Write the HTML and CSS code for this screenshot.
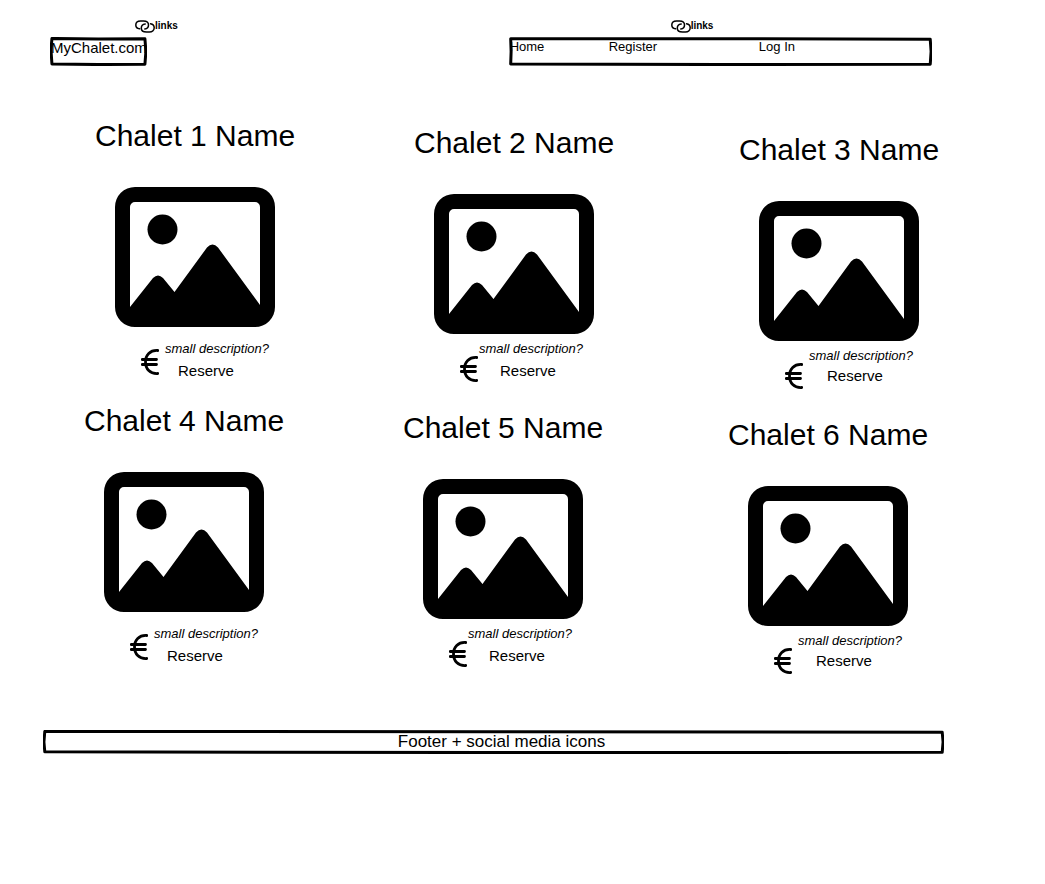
FILE: index.html
```html
<!DOCTYPE html>
<html lang="en">
<head>
<meta charset="utf-8">
<meta name="viewport" content="width=device-width, initial-scale=1">
<title>MyChalet.com</title>
<link rel="stylesheet" href="styles.css">
</head>
<body>
<svg class="defs" aria-hidden="true">
  <symbol id="chain" viewBox="0 0 20 13">
    <path d="M4.500 8.800C2 8.500 .8 7 .8 5C.8 2.500 2.800 1 5.500 1H8.500C11.500 1 13.500 2.700 13.500 5C13.500 7.300 12 8.800 9.800 9M15.500 3.800C18 4.200 19.200 5.800 19.200 7.800C19.200 10.300 17 12 14.500 12H11.500C8.500 12 6.300 10.500 6.300 8.200C6.300 6 8 4.200 10.200 4" fill="none" stroke="#000" stroke-width="1.500" stroke-linecap="round"/>
  </symbol>
  <symbol id="picture" viewBox="0 0 160 140">
    <path fill-rule="evenodd" d="M20 0H140A20 20 0 0 1 160 20V120A20 20 0 0 1 140 140H20A20 20 0 0 1 0 120V20A20 20 0 0 1 20 0ZM20 15A5 5 0 0 0 15 20V120L38 91Q43 86 48 91L59.500 105L92 60.500Q97.500 54.500 103 60.500L145 118V20A5 5 0 0 0 140 15Z"/>
    <circle cx="47.500" cy="42.500" r="15"/>
  </symbol>
  <symbol id="euro" viewBox="0 0 18 26">
    <path d="M16.800 1.500C9 1 4.500 6 4.500 13S9 25 16.800 24.500M1.200 10.500H15.500M1.200 15.500H15.500" fill="none" stroke="#000" stroke-width="2.800" stroke-linecap="round"/>
  </symbol>
</svg>

<header class="header">
  <div class="brand">
    <div class="note"><svg class="chain"><use href="#chain"/></svg><span>links</span></div>
    <div class="box">
      <svg class="outline" viewBox="0 0 100 100" preserveAspectRatio="none" aria-hidden="true"><path d="M2 5L50 7L98 6L99 50L98 94L50 95L2 93L1 45Z"/></svg>
      <a class="logo" href="#">MyChalet.com</a>
    </div>
  </div>
  <div class="menu">
    <div class="note"><svg class="chain"><use href="#chain"/></svg><span>links</span></div>
    <nav class="box">
      <svg class="outline" viewBox="0 0 100 100" preserveAspectRatio="none" aria-hidden="true"><path d="M.4 6L50 6L99.500 8L99.700 50L99.500 94L50 95L.4 93L.5 50Z"/></svg>
      <div class="links"><a href="#">Home</a><a href="#">Register</a><a href="#">Log In</a></div>
    </nav>
  </div>
</header>

<main class="chalets">
  <div class="row">
    <article class="card"><h2>Chalet 1 Name</h2><svg class="picture"><use href="#picture"/></svg><div class="details"><svg class="euro"><use href="#euro"/></svg><div class="info"><p>small description?</p><button type="button">Reserve</button></div></div></article>
    <article class="card"><h2>Chalet 2 Name</h2><svg class="picture"><use href="#picture"/></svg><div class="details"><svg class="euro"><use href="#euro"/></svg><div class="info"><p>small description?</p><button type="button">Reserve</button></div></div></article>
    <article class="card"><h2>Chalet 3 Name</h2><svg class="picture"><use href="#picture"/></svg><div class="details"><svg class="euro"><use href="#euro"/></svg><div class="info"><p>small description?</p><button type="button">Reserve</button></div></div></article>
  </div>
  <div class="row row-shifted">
    <article class="card"><h2>Chalet 4 Name</h2><svg class="picture"><use href="#picture"/></svg><div class="details"><svg class="euro"><use href="#euro"/></svg><div class="info"><p>small description?</p><button type="button">Reserve</button></div></div></article>
    <article class="card"><h2>Chalet 5 Name</h2><svg class="picture"><use href="#picture"/></svg><div class="details"><svg class="euro"><use href="#euro"/></svg><div class="info"><p>small description?</p><button type="button">Reserve</button></div></div></article>
    <article class="card"><h2>Chalet 6 Name</h2><svg class="picture"><use href="#picture"/></svg><div class="details"><svg class="euro"><use href="#euro"/></svg><div class="info"><p>small description?</p><button type="button">Reserve</button></div></div></article>
  </div>
</main>

<footer class="footer box">
  <svg class="outline" viewBox="0 0 100 100" preserveAspectRatio="none" aria-hidden="true"><path d="M.2 6L50 7L99.800 9L99.900 50L99.800 93L50 94L.2 91L.1 50Z"/></svg>
  <p>Footer + social media icons</p>
</footer>
</body>
</html>
```
FILE: styles.css
```css
* {
  box-sizing: border-box;
}

body {
  margin: 0;
  background: #fff;
  color: #000;
  font-family: "Liberation Sans", Arial, sans-serif;
}

h2,
p {
  margin: 0;
  font-weight: 400;
}

a {
  color: inherit;
  text-decoration: none;
}

.defs {
  display: none;
}

/* Sketched frame, stretched behind the content of its box */
.box {
  position: relative;
}

.outline {
  position: absolute;
  inset: 0;
  z-index: -1;
  width: 100%;
  height: 100%;
}

.outline path {
  fill: none;
  stroke: #000;
  stroke-width: 3px;
  stroke-linejoin: round;
  vector-effect: non-scaling-stroke;
}

.header {
  display: flex;
  justify-content: space-between;
  padding: 19px 113px 0 50px;
}

.note {
  display: flex;
  align-items: center;
  height: 14px;
  margin-bottom: 4px;
  font-size: 10px;
  font-weight: 700;
  line-height: 14px;
}

.chain {
  width: 20px;
  height: 13px;
}

.brand .note {
  padding-left: 85px;
}

.brand .box {
  width: fit-content;
  padding: 1px 0 8px 1px;
}

.logo {
  display: block;
  font-size: 15px;
  line-height: 20px;
}

.menu {
  flex: 0 0 48%;
}

.menu .note {
  padding-left: 162px;
}

.links {
  display: grid;
  grid-template-columns: 99fr 150fr 173fr;
  padding: 0 0 9px 1px;
  font-size: 13px;
  line-height: 20px;
}

.chalets {
  display: flex;
  flex-direction: column;
  gap: 12px;
  padding-top: 50px;
}

.row {
  display: grid;
  grid-template-columns: 319fr 325fr 306fr;
  padding-left: 95px;
}

.row-shifted {
  padding: 0 11px 0 84px;
}

.card:nth-child(2) {
  padding-top: 7px;
}

.card:nth-child(3) {
  padding-top: 14px;
}

.card h2 {
  font-size: 30px;
  line-height: 40px;
  white-space: nowrap;
}

.picture {
  display: block;
  width: 160px;
  height: 140px;
  margin: 31px 0 0 20px;
}

.details {
  display: flex;
  align-items: flex-start;
  gap: 6px;
  padding-left: 46px;
}

.euro {
  width: 18px;
  height: 26px;
  margin-top: 22px;
}

.info {
  display: flex;
  flex-direction: column;
  align-items: flex-start;
  gap: 2px;
  padding-top: 12px;
}

.info p {
  font-size: 13px;
  font-style: italic;
  line-height: 20px;
}

.info button {
  margin: 0 0 0 13px;
  padding: 0;
  border: 0;
  background: none;
  color: inherit;
  font: inherit;
  font-size: 15px;
  line-height: 20px;
}

.card:nth-child(2) .details {
  gap: 1px;
}

.card:nth-child(n + 2) .info {
  padding-top: 5px;
}

.card:nth-child(2) button {
  margin-left: 21px;
}

.card:nth-child(3) .info {
  gap: 0;
}

.card:nth-child(3) button {
  margin-left: 18px;
}

.footer {
  margin: 56px 101px 0 43px;
  padding: 2px 0 2px 16px;
  font-size: 17px;
  line-height: 20px;
  text-align: center;
}
```
